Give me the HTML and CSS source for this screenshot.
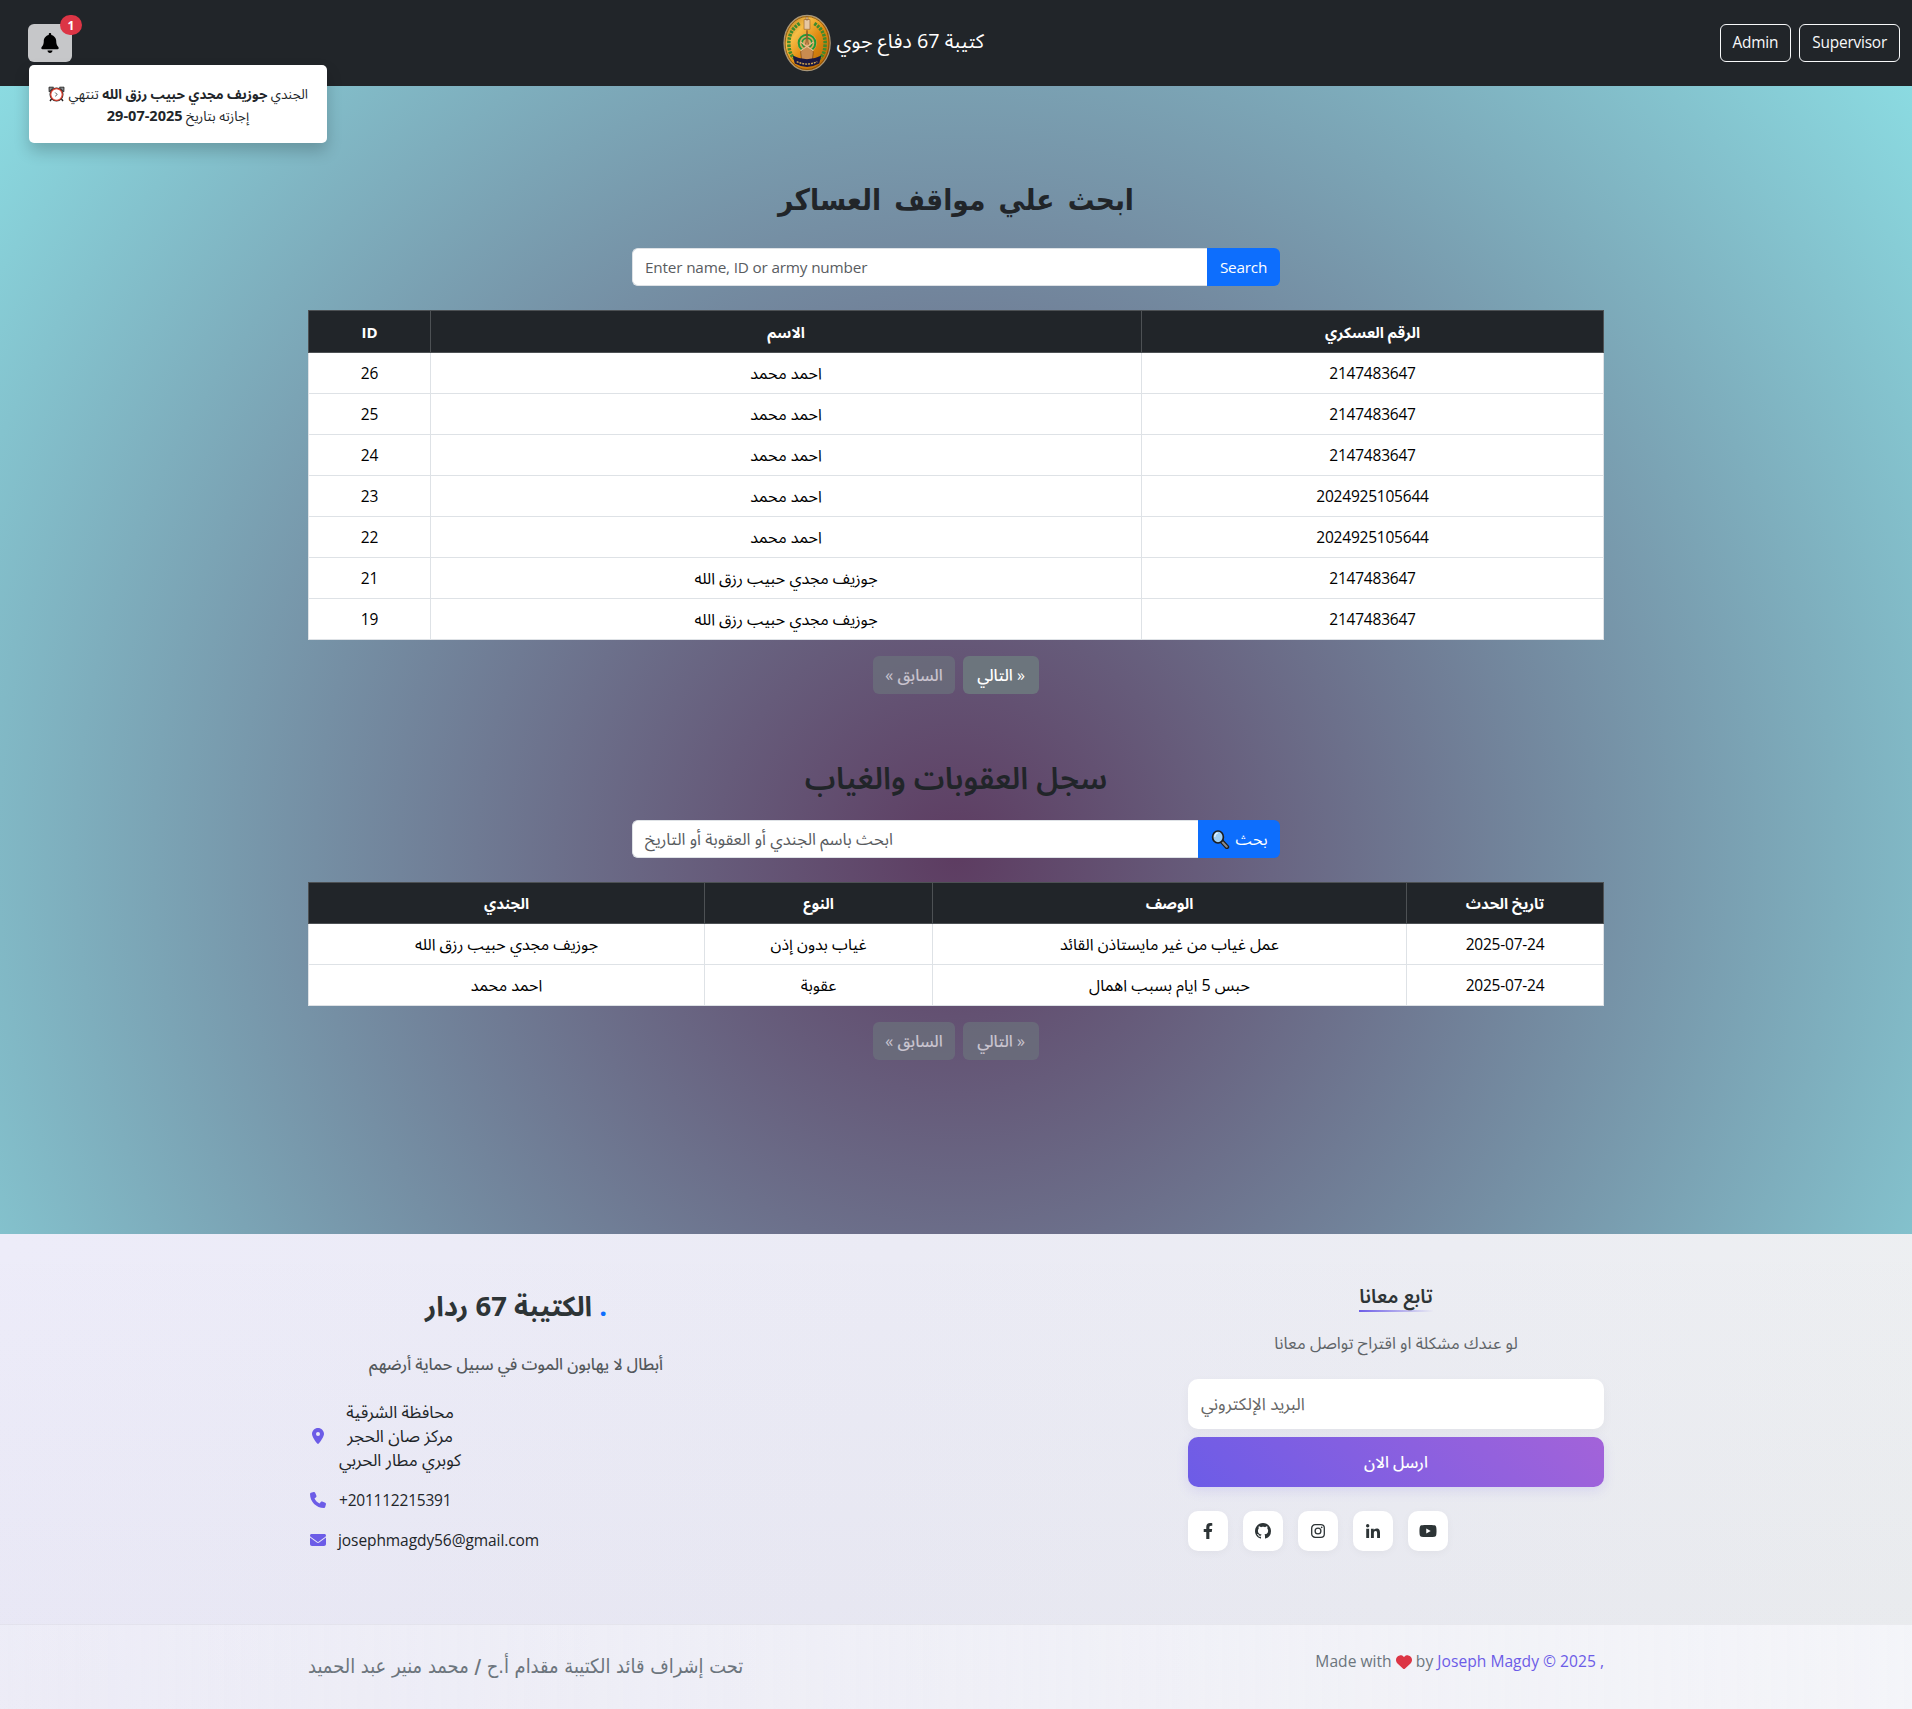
FILE: index.html
```html
<!DOCTYPE html>
<html lang="en">
<head>
<meta charset="utf-8">
<title>كتيبة 67 دفاع جوي</title>
<link rel="stylesheet" href="styles.css">
</head>
<body>
<nav class="navbar">
  <div class="notify">
    <button class="bell" type="button" aria-label="notifications">
      <svg width="18" height="20" viewBox="0 0 448 512"><path d="M224 0c-17.7 0-32 14.3-32 32V51.2C119 66 64 130.6 64 208v18.8c0 47-17.3 92.4-48.5 127.6l-7.4 8.3c-8.4 9.4-10.4 22.9-5.3 34.4S19.4 416 32 416H416c12.6 0 24-7.4 29.2-18.9s3.1-25-5.3-34.4l-7.4-8.3C401.3 319.2 384 273.9 384 226.8V208c0-77.4-55-142-128-156.8V32c0-17.7-14.3-32-32-32zm45.3 493.3c12-12 18.7-28.3 18.7-45.3H224 160c0 17 6.7 33.3 18.7 45.3s28.3 18.7 45.3 18.7s33.3-6.7 45.3-18.7z"/></svg>
    </button>
    <span class="badge">1</span>
    <div class="popup"><svg class="clock" width="17" height="16" viewBox="0 0 17 16"><path d="M1 1.200h4.500L1.200 5.800zM16 1.200h-4.500l4.300 4.600z" fill="#8c8f92" stroke="#222" stroke-width=".9"/><path d="M3.500 13l-1.500 2M13.500 13l1.500 2" stroke="#222" stroke-width="1.400"/><circle cx="8.500" cy="8.500" r="6" fill="#fff" stroke="#222" stroke-width="2"/><circle cx="8.500" cy="8.500" r="5.800" fill="#fff" stroke="#e2402f" stroke-width="1.300"/><path d="M7.200 6.500l2 2-2 1.800" fill="none" stroke="#444" stroke-width=".9"/></svg> الجندي <b>جوزيف مجدي حبيب رزق الله</b> تنتهي<br>إجازته بتاريخ <b class="date">2025-07-29</b></div>
  </div>
  <div class="brand">
    <svg class="logo" width="48" height="58" viewBox="0 0 49 58">
      <defs>
        <linearGradient id="gold" x1="0" y1="0" x2="1" y2="1">
          <stop offset="0" stop-color="#a8650c"/><stop offset=".3" stop-color="#f6bd45"/><stop offset=".55" stop-color="#e08a10"/><stop offset="1" stop-color="#a85f08"/>
        </linearGradient>
      </defs>
      <ellipse cx="24.6" cy="29" rx="23.6" ry="28.2" fill="url(#gold)" stroke="#a8977a" stroke-width="1.2"/>
      <ellipse cx="24.6" cy="29" rx="22.4" ry="27" fill="none" stroke="#6d3f08" stroke-width=".7"/>
      <path d="M17 9C9 14 5.500 22 6 31s3 11 6 14M32 9c8 5 11.500 13 11 22s-3 11-6 14" fill="none" stroke="#3f8a2c" stroke-width="3.600" stroke-dasharray="2.600 1"/>
      <circle cx="24.500" cy="29" r="10" fill="#d9a860"/>
      <circle cx="24.500" cy="29" r="8.500" fill="none" stroke="#1f9a35" stroke-width="2"/>
      <circle cx="24.500" cy="29" r="5" fill="none" stroke="#1f9a35" stroke-width="1.800"/>
      <path d="M21.500 5h6v10h-6zM23.500 2.500h2v3h-2z" fill="#e6c7a2" stroke="#8c5a2a" stroke-width=".6"/>
      <path d="M24.500 16l1 12 1.500 6 4 4-1 8H19l-1-8 4-4 1.500-6z" fill="#c98b50" stroke="#79461d" stroke-width=".7"/>
      <path d="M18 28l13 9M31 28l-13 9" stroke="#e7c08e" stroke-width="1.200"/>
      <path d="M10 42q14.500 7 29 0l-2 8q-12.500 7-25 0z" fill="#1a1840"/>
      <path d="M14 48q10.500 5 21 0" fill="none" stroke="#d7a850" stroke-width="1.400" stroke-dasharray="2 1"/>
    </svg>
    <span>كتيبة 67 دفاع جوي</span>
  </div>
  <div class="links">
    <a class="link">Admin</a>
    <a class="link">Supervisor</a>
  </div>
</nav>

<main class="main">
  <h1 class="title">ابحث علي مواقف العساكر</h1>
  <div class="search">
    <div class="field latin">Enter name, ID or army number</div>
    <button class="go go-en" type="button">Search</button>
  </div>
  <table class="table soldiers">
    <colgroup><col class="c-id"><col class="c-name"><col></colgroup>
    <thead><tr><th>ID</th><th>الاسم</th><th>الرقم العسكري</th></tr></thead>
    <tbody>
      <tr><td class="num">26</td><td>احمد محمد</td><td class="num">2147483647</td></tr>
      <tr><td class="num">25</td><td>احمد محمد</td><td class="num">2147483647</td></tr>
      <tr><td class="num">24</td><td>احمد محمد</td><td class="num">2147483647</td></tr>
      <tr><td class="num">23</td><td>احمد محمد</td><td class="num">2024925105644</td></tr>
      <tr><td class="num">22</td><td>احمد محمد</td><td class="num">2024925105644</td></tr>
      <tr><td class="num">21</td><td>جوزيف مجدي حبيب رزق الله</td><td class="num">2147483647</td></tr>
      <tr><td class="num">19</td><td>جوزيف مجدي حبيب رزق الله</td><td class="num">2147483647</td></tr>
    </tbody>
  </table>
  <div class="pager">
    <button class="page prev off" type="button">« السابق</button>
    <button class="page next" type="button">التالي »</button>
  </div>

  <h2 class="subtitle">سجل العقوبات والغياب</h2>
  <div class="search">
    <div class="field field-ar">ابحث باسم الجندي أو العقوبة أو التاريخ</div>
    <button class="go go-ar" type="button"><svg width="19" height="19" viewBox="0 0 19 19"><path d="M10.500 11l5.500 6" stroke="#1d1d1d" stroke-width="4.400" stroke-linecap="round"/><path d="M11.500 12.200l4.300 4.600" stroke="#8a8a8a" stroke-width="2" stroke-linecap="round"/><ellipse cx="7" cy="7" rx="5.400" ry="6" fill="#9fd0f5" stroke="#1d1d1d" stroke-width="1.700"/><path d="M3.800 7a3.300 4 0 0 1 3-3.800" fill="none" stroke="#e8f5ff" stroke-width="1.300"/></svg>بحث</button>
  </div>
  <table class="table">
    <colgroup><col class="c-soldier"><col class="c-type"><col class="c-desc"><col></colgroup>
    <thead><tr><th>الجندي</th><th>النوع</th><th>الوصف</th><th>تاريخ الحدث</th></tr></thead>
    <tbody>
      <tr><td>جوزيف مجدي حبيب رزق الله</td><td>غياب بدون إذن</td><td>عمل غياب من غير مايستاذن القائد</td><td class="num">2025-07-24</td></tr>
      <tr><td>احمد محمد</td><td>عقوبة</td><td>حبس 5 ايام بسبب اهمال</td><td class="num">2025-07-24</td></tr>
    </tbody>
  </table>
  <div class="pager">
    <button class="page prev off" type="button">« السابق</button>
    <button class="page next off" type="button">التالي »</button>
  </div>
</main>

<footer class="footer">
  <div class="footer-top">
    <section class="about">
      <h3 class="unit">الكتيبة 67 ردار <span class="dot">.</span></h3>
      <p class="motto">أبطال لا يهابون الموت في سبيل حماية أرضهم</p>
      <ul class="contact">
        <li class="address">
          <svg width="16" height="16" viewBox="-64 0 512 512"><path d="M215.700 499.200C267 435 384 279.400 384 192C384 86 298 0 192 0S0 86 0 192c0 87.400 117 243 168.300 307.200c12.300 15.300 35.100 15.300 47.400 0zM192 128a64 64 0 1 1 0 128 64 64 0 1 1 0-128z"/></svg>
          <span class="lines">محافظة الشرقية<br>مركز صان الحجر<br>كوبري مطار الحربي</span>
        </li>
        <li>
          <svg width="16" height="16" viewBox="0 0 512 512"><path d="M164.900 24.600c-7.700-18.600-28-28.500-47.400-23.200l-88 24C12.100 30.200 0 46 0 64C0 311.400 200.600 512 448 512c18 0 33.800-12.100 38.600-29.500l24-88c5.300-19.400-4.600-39.700-23.200-47.400l-96-40c-16.300-6.800-35.200-2.100-46.300 11.600L304.700 368C234.300 334.700 177.300 277.700 144 207.300L193.300 167c13.700-11.200 18.400-30 11.600-46.300l-40-96z"/></svg>
          <span class="num">+201112215391</span>
        </li>
        <li>
          <svg width="16" height="16" viewBox="0 0 512 512"><path d="M48 64C21.500 64 0 85.500 0 112c0 15.100 7.100 29.300 19.200 38.400L236.800 313.600c11.400 8.500 27 8.500 38.400 0L492.800 150.400c12.100-9.100 19.200-23.300 19.200-38.400c0-26.500-21.500-48-48-48H48zM0 176V384c0 35.300 28.700 64 64 64H448c35.300 0 64-28.700 64-64V176L294.400 339.200c-22.800 17.100-54 17.100-76.800 0L0 176z"/></svg>
          <span class="mail">josephmagdy56@gmail.com</span>
        </li>
      </ul>
    </section>
    <section class="follow">
      <h4 class="follow-title">تابع معانا</h4>
      <p class="follow-text">لو عندك مشكلة او اقتراح تواصل معانا</p>
      <div class="email">البريد الإلكتروني</div>
      <button class="send" type="button">ارسل الان</button>
      <div class="social">
        <a><svg width="10" height="16" viewBox="0 0 320 512"><path d="M279.140 288l14.220-92.660h-88.910v-60.130c0-25.350 12.420-50.060 52.240-50.060h40.420V6.260S260.430 0 225.360 0c-73.220 0-121.080 44.380-121.080 124.720v70.620H22.890V288h81.390v224h100.170V288z"/></svg></a>
        <a><svg width="16" height="16" viewBox="0 0 16 16"><path d="M8 0C3.580 0 0 3.580 0 8c0 3.540 2.290 6.530 5.470 7.590.4.070.55-.17.55-.38 0-.19-.01-.82-.01-1.490-2.010.37-2.530-.49-2.690-.94-.09-.23-.48-.94-.82-1.130-.28-.15-.68-.52-.01-.53.63-.01 1.080.58 1.230.82.72 1.210 1.870.87 2.330.66.070-.52.28-.87.51-1.070-1.780-.2-3.640-.89-3.640-3.950 0-.87.31-1.590.82-2.150-.08-.2-.36-1.020.08-2.120 0 0 .67-.21 2.200.82.64-.18 1.320-.27 2-.27s1.360.09 2 .27c1.530-1.040 2.200-.82 2.200-.82.44 1.100.16 1.920.08 2.120.51.56.82 1.270.82 2.150 0 3.070-1.870 3.750-3.650 3.950.29.25.54.73.54 1.480 0 1.070-.01 1.930-.01 2.200 0 .21.15.46.55.38A8.010 8.010 0 0 0 16 8c0-4.420-3.580-8-8-8z"/></svg></a>
        <a><svg width="14" height="14" viewBox="0 0 14 14"><rect x=".7" y=".7" width="12.600" height="12.600" rx="3.400" fill="none" stroke="#2d3436" stroke-width="1.300"/><circle cx="7" cy="7" r="2.900" fill="none" stroke="#2d3436" stroke-width="1.300"/><circle cx="10.700" cy="3.300" r=".85"/></svg></a>
        <a><svg width="14" height="16" viewBox="0 -32 448 512"><path d="M100.280 448H7.400V148.900h92.880zM53.790 108.100C24.090 108.100 0 83.500 0 53.800a53.790 53.790 0 0 1 107.580 0c0 29.700-24.100 54.300-53.790 54.300zM447.900 448h-92.680V302.400c0-34.700-.7-79.200-48.290-79.200-48.290 0-55.690 37.700-55.690 76.700V448h-92.780V148.900h89.080v40.800h1.300c12.400-23.500 42.690-48.300 87.880-48.300 94 0 111.280 61.900 111.280 142.300V448z"/></svg></a>
        <a><svg width="18" height="16" viewBox="0 0 576 512"><path d="M549.655 124.083c-6.281-23.650-24.787-42.276-48.284-48.597C458.781 64 288 64 288 64S117.220 64 74.629 75.486c-23.497 6.322-42.003 24.947-48.284 48.597-11.412 42.867-11.412 132.305-11.412 132.305s0 89.438 11.412 132.305c6.281 23.650 24.787 41.500 48.284 47.821C117.220 448 288 448 288 448s170.780 0 213.371-11.486c23.497-6.321 42.003-24.171 48.284-47.821 11.412-42.867 11.412-132.305 11.412-132.305s0-89.438-11.412-132.305zm-317.510 213.508V175.185l142.739 81.205-142.739 81.201z"/></svg></a>
      </div>
    </section>
  </div>
  <div class="footer-bottom">
    <div class="bottom-inner">
      <p class="command">تحت إشراف قائد الكتيبة مقدام أ.ح <b>/</b> محمد منير عبد الحميد</p>
      <p class="made">Made with <svg width="16" height="16" viewBox="0 0 512 512"><path d="M47.600 300.400L228.300 469.100c7.500 7 17.400 10.900 27.700 10.900s20.200-3.900 27.700-10.900L464.400 300.400c30.400-28.300 47.600-68 47.600-109.500v-5.800c0-69.900-50.500-129.500-119.400-141C347 36.500 300.600 51.400 268 84L256 96 244 84c-32.600-32.600-79-47.500-124.600-39.900C50.500 55.600 0 115.200 0 185.100v5.800c0 41.500 17.200 81.200 47.600 109.500z"/></svg> by <span class="author">Joseph Magdy © 2025 ,</span></p>
    </div>
  </div>
</footer>
</body>
</html>
```
FILE: styles.css
```css
* { box-sizing: border-box; }

body {
  margin: 0;
  font-family: "Open Sans", "Noto Sans Arabic", "DejaVu Sans Condensed", sans-serif;
  font-size: 16px;
  line-height: 24px;
  color: #212529;
  background: radial-gradient(circle, #5d3c61 0%, #8de2e7 100%);
}

h1, h2, h3, h4, p, ul { margin: 0; padding: 0; }
button { font: inherit; border: 0; padding: 0; }

/* Navbar */
.navbar {
  height: 86px;
  padding: 0 12px 0 28px;
  background: #212529;
  display: flex;
  align-items: center;
  justify-content: space-between;
}
.notify { position: relative; width: 44px; height: 38px; }
.bell {
  width: 44px;
  height: 38px;
  border-radius: 6px;
  background: #c6c7c9;
  display: flex;
  align-items: center;
  justify-content: center;
}
.badge {
  position: absolute;
  left: 32px;
  top: -9px;
  width: 22px;
  height: 20px;
  border-radius: 10px;
  background: #dc3545;
  color: #fff;
  font-size: 12px;
  font-weight: 700;
  line-height: 21px;
  text-align: center;
}
.popup {
  position: absolute;
  z-index: 5;
  left: 1px;
  top: 41px;
  width: 298px;
  height: 78px;
  padding: 19px 8px;
  border-radius: 5px;
  background: #fff;
  box-shadow: 0 8px 16px rgba(0, 0, 0, .2);
  font-size: 13.4px;
  line-height: 21px;
  text-align: center;
  white-space: nowrap;
}
.popup b { font-weight: 700; }
.popup .date { font-size: 14.5px; }
.clock { vertical-align: -3px; }
.brand {
  display: flex;
  align-items: center;
  gap: 6px;
  margin-right: 25px;
  color: #fff;
  font-size: 19.8px;
}
.brand span { padding-bottom: 4px; }
.links { display: flex; gap: 8px; }
.link {
  height: 38px;
  padding: 6px 12px;
  border: 1px solid #f8f9fa;
  border-radius: 6px;
  color: #f8f9fa;
  font-size: 15.4px;
  letter-spacing: -.2px;
}

/* Main */
.main {
  width: 1296px;
  height: 1148px;
  margin: 0 auto;
  padding-top: 88px;
  display: flex;
  flex-direction: column;
  align-items: center;
}
.title {
  height: 74px;
  font-family: "DejaVu Sans Condensed", "DejaVu Sans", sans-serif;
  font-size: 29.5px;
  font-weight: 700;
  line-height: 53px;
  word-spacing: 4px;
}
.search { width: 648px; height: 38px; display: flex; margin-bottom: 24px; }
.field {
  flex: 1;
  padding: 6px 12px;
  border: 1px solid #dee2e6;
  border-right: 0;
  border-radius: 6px 0 0 6px;
  background: #fff;
  color: #595c5f;
}
.latin { font-size: 15.3px; letter-spacing: -.17px; }
.num { font-size: 15.5px; letter-spacing: -.22px; }
.field-ar { font-size: 16.500px; }
.go { background: #0d6efd; color: #fff; border-radius: 0 6px 6px 0; }
.go-en { width: 73px; font-size: 15.3px; letter-spacing: -.2px; }
.go-ar { width: 82px; display: flex; align-items: center; justify-content: center; gap: 6px; }
.table {
  width: 1296px;
  table-layout: fixed;
  border-collapse: collapse;
  text-align: center;
}
.table th {
  height: 41px;
  padding: 0;
  background: #212529;
  color: #fff;
  border: 1px solid #4d5154;
  font-size: 15px;
  font-weight: 700;
}
.table.soldiers th { height: 42px; }
.table td {
  height: 41px;
  padding: 0;
  background: #fff;
  color: #000;
  border: 1px solid #dee2e6;
}
.c-id { width: 122px; }
.c-name { width: 711px; }
.c-soldier { width: 396px; }
.c-type { width: 228px; }
.c-desc { width: 474px; }
.pager { display: flex; gap: 8px; margin-top: 16px; }
.page { height: 38px; border-radius: 6px; background: #6c757d; color: #fff; font-weight: 500; }
.prev { width: 82px; }
.next { width: 76px; }
.off { opacity: .65; }
.subtitle {
  height: 126px;
  padding-top: 62px;
  font-size: 30.8px;
  font-weight: 600;
  line-height: 42px;
}

/* Footer */
.footer {
  height: 475px;
  background:
    linear-gradient(rgba(90, 90, 130, 0), rgba(90, 90, 130, .035)),
    linear-gradient(100deg, #edecf9 0%, #ebebf5 45%, #edeff1 100%);
}
.footer-top {
  width: 1296px;
  height: 390px;
  margin: 0 auto;
  display: flex;
  justify-content: space-between;
}
.about { width: 416px; padding-top: 48px; text-align: center; }
.unit { color: #2d3436; font-size: 27.500px; font-weight: 700; line-height: 48px; }
.dot { color: #0d6efd; }
.motto { margin-top: 22px; color: #53585c; font-weight: 500; }
.contact { list-style: none; margin-top: 24px; display: flex; flex-direction: column; gap: 16px; }
.contact li { display: flex; align-items: center; gap: 13px; }
.contact svg { margin-left: 2px; fill: #6c5ce7; }
.lines { font-size: 16.900px; }
.mail { font-size: 15.5px; letter-spacing: -.08px; margin-left: -1px; }
.follow { width: 416px; padding-top: 50px; text-align: center; }
.follow-title {
  width: max-content;
  margin: 0 auto;
  padding-bottom: 2px;
  color: #2d3436;
  font-size: 19.500px;
  font-weight: 600;
  border-bottom: 2px solid;
  border-image: linear-gradient(90deg, #6c5ce7, rgba(108, 92, 231, 0)) 1;
}
.follow-text { margin-top: 19px; color: #5f6468; font-size: 16.500px; }
.email {
  height: 50px;
  margin-top: 24px;
  padding: 13px 13px;
  border-radius: 10px;
  background: #fff;
  box-shadow: 0 4px 12px rgba(0, 0, 0, .04);
  color: #666;
  font-size: 17px;
  text-align: left;
}
.send {
  width: 100%;
  height: 50px;
  margin-top: 8px;
  border-radius: 10px;
  background: linear-gradient(45deg, #6c5ce7, #a363d9);
  box-shadow: 0 4px 12px rgba(108, 92, 231, .15);
  color: #fff;
  font-weight: 500;
}
.social { display: flex; gap: 15px; margin-top: 24px; }
.social a {
  width: 40px;
  height: 40px;
  border-radius: 10px;
  background: #fff;
  box-shadow: 0 2px 8px rgba(0, 0, 0, .04);
  display: flex;
  align-items: center;
  justify-content: center;
}
.social svg { fill: #2d3436; }
.footer-bottom {
  height: 85px;
  border-top: 1px solid rgba(0, 0, 0, .04);
  background: linear-gradient(90deg, rgba(255, 255, 255, .2), rgba(250, 250, 255, .65));
}
.bottom-inner {
  width: 1296px;
  margin: 0 auto;
  padding-top: 24px;
  display: flex;
  justify-content: space-between;
  color: #6c757d;
}
.command {
  padding-top: 6px;
  font-family: "DejaVu Sans Condensed", "DejaVu Sans", sans-serif;
  font-size: 19.9px;
}
.made { font-size: 15.6px; letter-spacing: .02px; }
.made svg { fill: #dc3545; vertical-align: -3px; }
.author { color: #6c5ce7; }
```
